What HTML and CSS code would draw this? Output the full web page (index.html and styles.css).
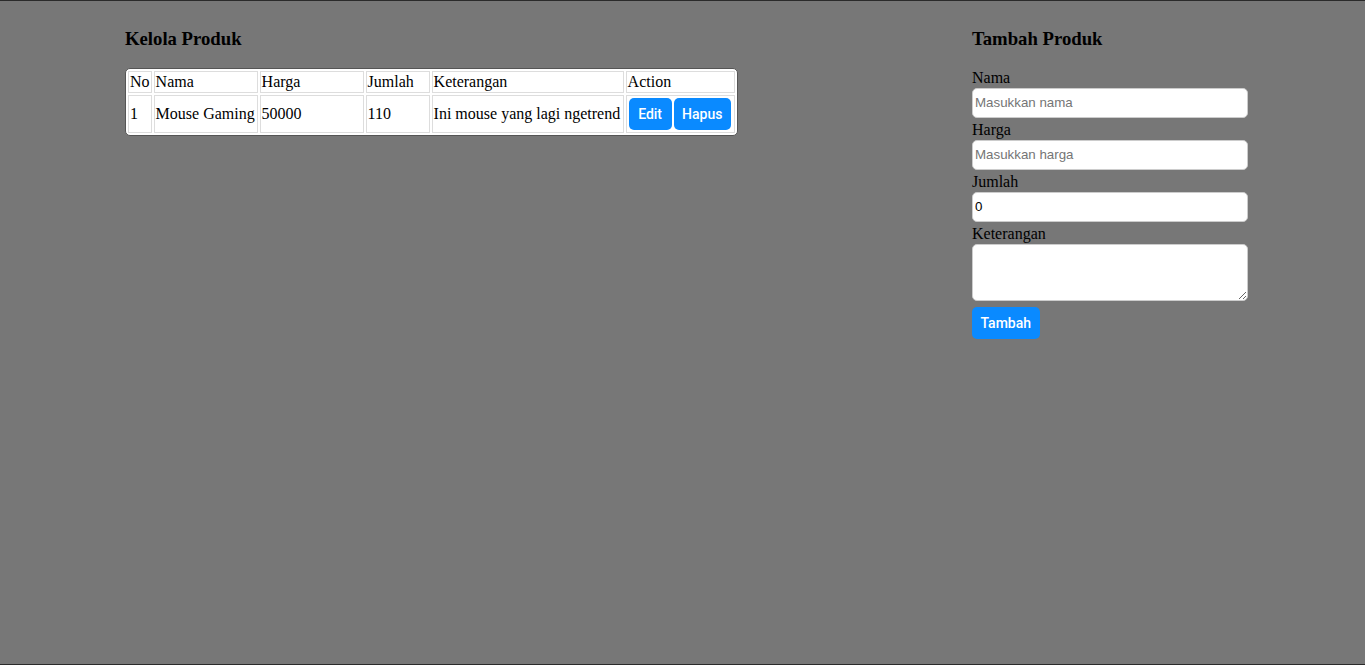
FILE: index.html
```html
<!DOCTYPE html>
<html>
<head>
<meta charset="utf-8">
<link rel="stylesheet" href="styles.css">
</head>
<body>
<div class="page">
  <section class="list">
    <h3>Kelola Produk</h3>
    <table class="tbl">
      <thead>
        <tr><td>No</td><td class="w-nama">Nama</td><td class="w-harga">Harga</td><td class="w-jumlah">Jumlah</td><td class="w-ket">Keterangan</td><td>Action</td></tr>
      </thead>
      <tbody>
        <tr>
          <td>1</td><td>Mouse Gaming</td><td>50000</td><td>110</td><td>Ini mouse yang lagi ngetrend</td>
          <td class="act"><button class="btn">Edit</button><button class="btn">Hapus</button></td>
        </tr>
      </tbody>
    </table>
  </section>
  <section class="form">
    <h3>Tambah Produk</h3>
    <label class="lbl">Nama</label>
    <input class="inp" type="text" placeholder="Masukkan nama">
    <label class="lbl">Harga</label>
    <input class="inp" type="text" placeholder="Masukkan harga">
    <label class="lbl">Jumlah</label>
    <input class="inp" type="number" value="0">
    <label class="lbl">Keterangan</label>
    <textarea class="txt"></textarea>
    <button class="btn btn-add">Tambah</button>
  </section>
</div>
</body>
</html>
```
FILE: styles.css
```css
html {
  border-top: 1px solid #2a2a2a;
  border-bottom: 1px solid #2a2a2a;
  background: #777777;
  height: 663px;
}
body {
  margin: 0;
  padding-top: 8px;
  font-family: "Liberation Serif", "Times New Roman", serif;
  font-size: 16px;
  color: #000;
}
.page {
  display: flex;
  justify-content: space-between;
  padding: 0 117px 0 125px;
}
h3 {
  font-size: 18.72px;
  font-weight: bold;
  margin: 18.72px 0;
  line-height: 21.5px;
}
.tbl {
  background: #fff;
  border: 1px solid #555;
  border-radius: 5px;
  border-spacing: 2px;
  width: 613px;
}
.tbl td {
  border: 1px solid #dddddd;
  padding: 1px;
  line-height: 18px;
  white-space: nowrap;
  box-sizing: border-box;
}
.tbl td.w-nama { width: 104px; }
.tbl td.w-harga { width: 104px; }
.tbl td.w-jumlah { width: 64px; }
.tbl td.w-ket { width: 192px; }
.tbl td.act {
  padding: 2px 3px 2px 2px;
}
.btn {
  background: #0a8aff;
  color: #fff;
  border: none;
  border-radius: 5px;
  font-family: Roboto, "Liberation Sans", Arial, sans-serif;
  font-size: 14px;
  font-weight: 500;
  height: 32px;
  min-width: 43px;
  padding: 0 8.5px;
  margin-right: 2px;
  vertical-align: middle;
}
.act .btn:last-child { margin-right: 0; }
.form {
  width: 276px;
  display: flex;
  flex-direction: column;
  align-items: flex-start;
}
.lbl {
  display: block;
  line-height: 20px;
}
.inp {
  box-sizing: border-box;
  width: 276px;
  height: 30px;
  margin: 0 0 2px 0;
  border: 1px solid #cccccc;
  border-radius: 5px;
  background: #fff;
  font-family: "Liberation Sans", Arial, sans-serif;
  font-size: 13.33px;
  padding: 1px 2px;
  color: #000;
}
.inp::placeholder { color: #757575; }
.txt {
  box-sizing: border-box;
  width: 276px;
  height: 57px;
  margin: 0;
  border: 1px solid #cccccc;
  border-radius: 5px;
  background: #fff;
}
.btn-add {
  margin-top: 6px;
}
```
